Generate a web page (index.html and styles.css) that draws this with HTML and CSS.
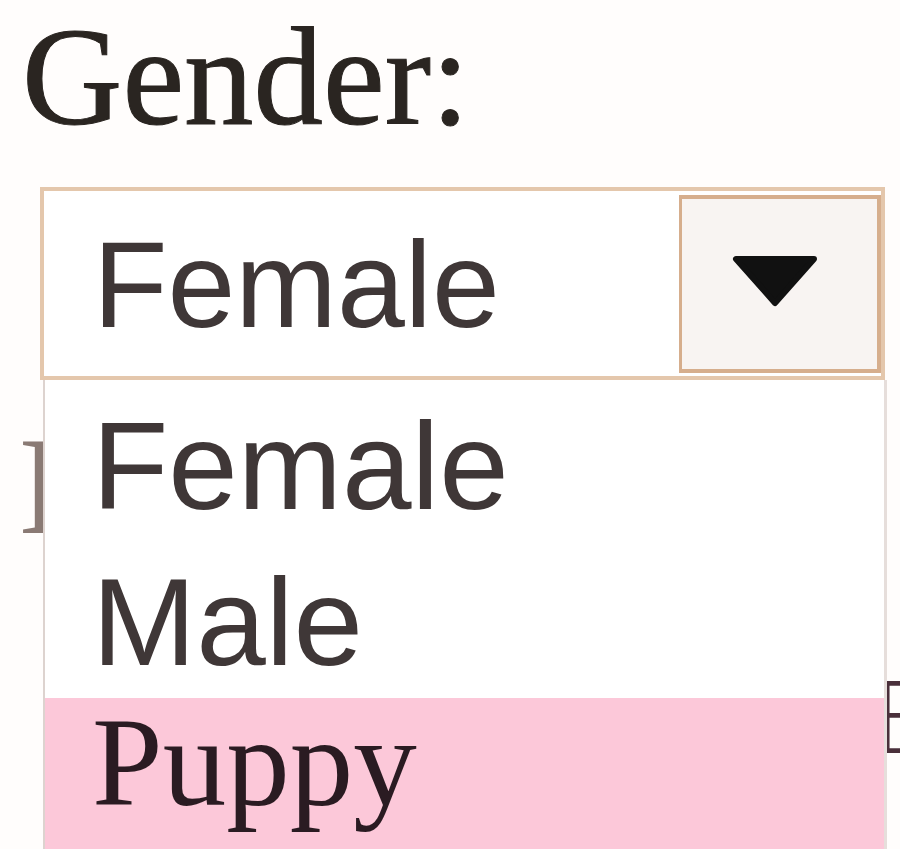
FILE: index.html
```html
<!DOCTYPE html>
<html>
<head>
    <meta charset="UTF-8">
    <meta name="viewport" content="width=device-width, initial-scale=1.0">
    <link rel="stylesheet" href="styles.css">
</head>
<body>
    <div class="field">
        <div class="field-label">Gender:</div>

        <div class="select">
            <div class="select-box">
                <span class="select-value">Female</span>
                <span class="select-btn">
                    <svg width="86" height="52" viewBox="0 0 86 52">
                        <polygon points="4,4 82,4 43,48" fill="#111" stroke="#111" stroke-width="6" stroke-linejoin="round"/>
                    </svg>
                </span>
            </div>

            <!-- opened list, drawn over the rest of the form -->
            <ul class="select-list">
                <li>Female</li>
                <li>Male</li>
                <li class="hover">Puppy</li>
            </ul>
        </div>

        <!-- next row of the form, mostly hidden by the open list -->
        <div class="field-under">
            <span class="under-left">I</span>
            <span class="under-right">B</span>
        </div>
    </div>
</body>
</html>
```

FILE: styles.css
```css
html, body {
    margin: 0;
    min-height: 849px;
    background: #fffdfc;
}

.field {
    padding-left: 22px;
    position: relative;
}

.field-label {
    font-family: "Liberation Serif", "Times New Roman", serif;
    font-size: 139px;
    line-height: 154px;
    color: #2a2521;
    -webkit-text-stroke: 1px #2a2521;
}

.select {
    position: relative;
    margin: 33px 15px 0 18px;
}

.select-box {
    display: flex;
    align-items: flex-start;
    height: 185px;
    border: 4px solid #e4c7ac;
    background: #fff;
}

.select-value {
    flex: 1;
    padding: 24px 0 0 49px;
    font-family: "Liberation Sans", Arial, sans-serif;
    font-size: 122px;
    line-height: 140px;
    color: #3f3737;
}

.select-btn {
    width: 202px;
    margin-top: 4px;
    height: 178px;
    box-sizing: border-box;
    border: 4px solid #d6ae8d;
    border-left-width: 3px;
    background: #f8f4f2;
    display: flex;
    justify-content: center;
    padding: 56px 10px 0 0;
}

.select-list {
    position: absolute;
    top: 100%;
    left: 3px;
    right: -2px;
    margin: 0;
    padding: 6px 0 0 0;
    list-style: none;
    background: #fff;
    border-left: 2px solid #ddd3cf;
    border-right: 3px solid #e6dedb;
    z-index: 2;
}

.select-list li {
    padding: 5px 0 0 47px;
    height: 151px;
    font-family: "Liberation Sans", Arial, sans-serif;
    font-size: 125px;
    line-height: 150px;
    color: #3f3737;
}

.select-list li.hover {
    background: #fcc8d9;
    font-family: "Liberation Serif", "Times New Roman", serif;
    font-size: 127px;
    line-height: 128px;
    height: 152px;
    padding-top: 0;
    color: #2a1b22;
}

.field-under {
    display: flex;
    justify-content: space-between;
    margin-top: 36px;
    font-family: "Liberation Serif", "Times New Roman", serif;
    font-size: 140px;
    line-height: 140px;
    color: #8a7a74;
}

.under-left {
    margin-left: -4px;
}

.under-right {
    margin-top: 230px;
    margin-right: -40px;
    font-size: 110px;
    color: #4a2f3a;
}
```
